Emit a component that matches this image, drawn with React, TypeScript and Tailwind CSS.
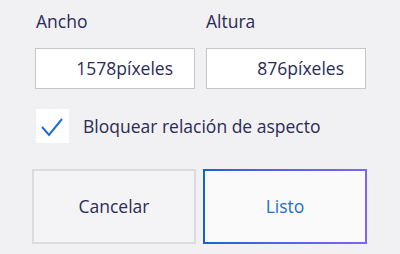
import React from "react";

export default function App() {
  return (
    <div
      className="w-[400px] h-[254px] bg-[#f1f1f3] pl-[32px] pt-[9px] text-[#2b2a58] overflow-hidden"
      style={{ fontFamily: '"Open Sans", "Noto Sans", sans-serif' }}
    >
      <div className="ml-[3px] grid grid-cols-[160px_160px] gap-x-[11px]">
        <div className="text-[17.5px] leading-[24px] pl-[1px]">Ancho</div>
        <div className="text-[17.5px] leading-[24px]">Altura</div>
        <div className="mt-[15px] h-[41px] bg-white border border-[#c6c6c8] flex items-center justify-end pr-[21px] text-[17.5px]">
          1578píxeles
        </div>
        <div className="mt-[15px] h-[41px] bg-white border border-[#c6c6c8] flex items-center justify-end pr-[21px] text-[17.5px]">
          876píxeles
        </div>
      </div>
      <div className="ml-[4px] mt-[20px] flex items-center gap-[14px]">
        <div className="w-[33px] h-[34px] bg-white flex items-center justify-center">
          <svg width="33" height="34" viewBox="0 0 33 34">
            <path d="M6 18 L13 26 L26 10" fill="none" stroke="#1a6fd0" strokeWidth="2" />
          </svg>
        </div>
        <div className="text-[17.5px] leading-[24px]">Bloquear relación de aspecto</div>
      </div>
      <div className="mt-[26px] flex gap-[7px]">
        <button className="w-[164px] h-[75px] bg-[#f4f4f6] border-2 border-[#dcdcde] text-[17.5px] text-[#2b2a58]">
          Cancelar
        </button>
        <div className="w-[164px] h-[75px] p-[2px] bg-gradient-to-r from-[#0f67c2] to-[#7b66f2]">
          <button className="w-full h-full bg-[#fafafb] text-[17.5px] text-[#1e6fc6]">Listo</button>
        </div>
      </div>
    </div>
  );
}
